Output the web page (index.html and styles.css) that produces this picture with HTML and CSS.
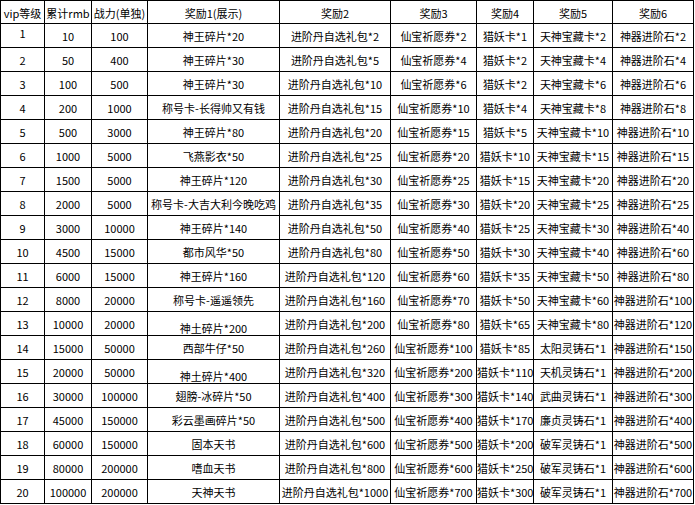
FILE: index.html
```html
<!DOCTYPE html>
<html lang="zh">
<head>
<meta charset="utf-8">
<link rel="stylesheet" href="styles.css">
</head>
<body>
<table class="vip">
<colgroup>
<col class="c1"><col class="c2"><col class="c3"><col class="c4"><col class="c5"><col class="c6"><col class="c7"><col class="c8"><col class="c9">
</colgroup>
<thead>
<tr class="head"><th>vip等级</th><th>累计rmb</th><th>战力(单独)</th><th>奖励1(展示)</th><th>奖励2</th><th>奖励3</th><th>奖励4</th><th>奖励5</th><th>奖励6</th></tr>
</thead>
<tbody>
<tr><td class="high">1</td><td>10</td><td>100</td><td>神王碎片*20</td><td>进阶丹自选礼包*2</td><td>仙宝祈愿券*2</td><td>猎妖卡*1</td><td>天神宝藏卡*2</td><td>神器进阶石*2</td></tr>
<tr><td>2</td><td>50</td><td>400</td><td>神王碎片*30</td><td>进阶丹自选礼包*5</td><td>仙宝祈愿券*4</td><td>猎妖卡*2</td><td>天神宝藏卡*4</td><td>神器进阶石*4</td></tr>
<tr><td>3</td><td>100</td><td>500</td><td>神王碎片*30</td><td>进阶丹自选礼包*10</td><td>仙宝祈愿券*6</td><td>猎妖卡*2</td><td>天神宝藏卡*6</td><td>神器进阶石*6</td></tr>
<tr><td>4</td><td>200</td><td>1000</td><td>称号卡-长得帅又有钱</td><td>进阶丹自选礼包*15</td><td>仙宝祈愿券*10</td><td>猎妖卡*4</td><td>天神宝藏卡*8</td><td>神器进阶石*8</td></tr>
<tr><td>5</td><td>500</td><td>3000</td><td>神王碎片*80</td><td>进阶丹自选礼包*20</td><td>仙宝祈愿券*15</td><td>猎妖卡*5</td><td>天神宝藏卡*10</td><td>神器进阶石*10</td></tr>
<tr><td>6</td><td>1000</td><td>5000</td><td>飞燕影衣*50</td><td>进阶丹自选礼包*25</td><td>仙宝祈愿券*20</td><td>猎妖卡*10</td><td>天神宝藏卡*15</td><td>神器进阶石*15</td></tr>
<tr><td>7</td><td>1500</td><td>5000</td><td>神王碎片*120</td><td>进阶丹自选礼包*30</td><td>仙宝祈愿券*25</td><td>猎妖卡*15</td><td>天神宝藏卡*20</td><td>神器进阶石*20</td></tr>
<tr><td>8</td><td>2000</td><td>5000</td><td>称号卡-大吉大利今晚吃鸡</td><td>进阶丹自选礼包*35</td><td>仙宝祈愿券*30</td><td>猎妖卡*20</td><td>天神宝藏卡*25</td><td>神器进阶石*25</td></tr>
<tr><td>9</td><td>3000</td><td>10000</td><td>神王碎片*140</td><td>进阶丹自选礼包*50</td><td>仙宝祈愿券*40</td><td>猎妖卡*25</td><td>天神宝藏卡*30</td><td>神器进阶石*40</td></tr>
<tr><td>10</td><td>4500</td><td>15000</td><td>都市风华*50</td><td>进阶丹自选礼包*80</td><td>仙宝祈愿券*50</td><td>猎妖卡*30</td><td>天神宝藏卡*40</td><td>神器进阶石*60</td></tr>
<tr><td>11</td><td>6000</td><td>15000</td><td>神王碎片*160</td><td>进阶丹自选礼包*120</td><td>仙宝祈愿券*60</td><td>猎妖卡*35</td><td>天神宝藏卡*50</td><td>神器进阶石*80</td></tr>
<tr><td>12</td><td>8000</td><td>20000</td><td>称号卡-遥遥领先</td><td>进阶丹自选礼包*160</td><td>仙宝祈愿券*70</td><td>猎妖卡*50</td><td>天神宝藏卡*60</td><td>神器进阶石*100</td></tr>
<tr><td>13</td><td>10000</td><td>20000</td><td class="low">神土碎片*200</td><td>进阶丹自选礼包*200</td><td>仙宝祈愿券*80</td><td>猎妖卡*65</td><td>天神宝藏卡*80</td><td>神器进阶石*120</td></tr>
<tr><td>14</td><td>15000</td><td>50000</td><td>西部牛仔*50</td><td>进阶丹自选礼包*260</td><td>仙宝祈愿券*100</td><td>猎妖卡*85</td><td>太阳灵铸石*1</td><td>神器进阶石*150</td></tr>
<tr><td>15</td><td>20000</td><td>50000</td><td class="low">神土碎片*400</td><td>进阶丹自选礼包*320</td><td>仙宝祈愿券*200</td><td>猎妖卡*110</td><td>天机灵铸石*1</td><td>神器进阶石*200</td></tr>
<tr><td>16</td><td>30000</td><td>100000</td><td>翅膀-冰碎片*50</td><td>进阶丹自选礼包*400</td><td>仙宝祈愿券*300</td><td>猎妖卡*140</td><td>武曲灵铸石*1</td><td>神器进阶石*300</td></tr>
<tr><td>17</td><td>45000</td><td>150000</td><td>彩云墨画碎片*50</td><td>进阶丹自选礼包*500</td><td>仙宝祈愿券*400</td><td>猎妖卡*170</td><td>廉贞灵铸石*1</td><td>神器进阶石*400</td></tr>
<tr><td>18</td><td>60000</td><td>150000</td><td>固本天书</td><td>进阶丹自选礼包*600</td><td>仙宝祈愿券*500</td><td>猎妖卡*200</td><td>破军灵铸石*1</td><td>神器进阶石*500</td></tr>
<tr><td>19</td><td>80000</td><td>200000</td><td>嗜血天书</td><td>进阶丹自选礼包*800</td><td>仙宝祈愿券*600</td><td>猎妖卡*250</td><td>破军灵铸石*1</td><td>神器进阶石*600</td></tr>
<tr><td>20</td><td>100000</td><td>200000</td><td>天神天书</td><td>进阶丹自选礼包*1000</td><td>仙宝祈愿券*700</td><td>猎妖卡*300</td><td>破军灵铸石*1</td><td>神器进阶石*700</td></tr>
</tbody>
</table>
</body>
</html>
```

FILE: styles.css
```css
html, body {
  margin: 0;
  padding: 0;
  background: #fff;
}
.vip {
  border-collapse: collapse;
  table-layout: fixed;
  width: 694px;
  font-family: "Noto Sans CJK SC", "Noto Sans", sans-serif;
  font-size: 11px;
  color: #000;
}
.vip th, .vip td {
  border: 1px solid #000;
  padding: 1px 0 0;
  text-align: center;
  vertical-align: middle;
  white-space: nowrap;
  overflow: visible;
  font-weight: normal;
  line-height: 14px;
}
.head { height: 23px; }
tbody tr { height: 24px; }
.c1 { width: 44px; }
.c2 { width: 47px; }
.c3 { width: 56px; }
.c4 { width: 132px; }
.c5 { width: 111px; }
.c6 { width: 86px; }
.c7 { width: 57px; }
.c8 { width: 79px; }
.c9 { width: 81px; }
.vip td.low { padding-top: 8px; }
.vip td.high { padding-top: 0; padding-bottom: 5px; }
```
